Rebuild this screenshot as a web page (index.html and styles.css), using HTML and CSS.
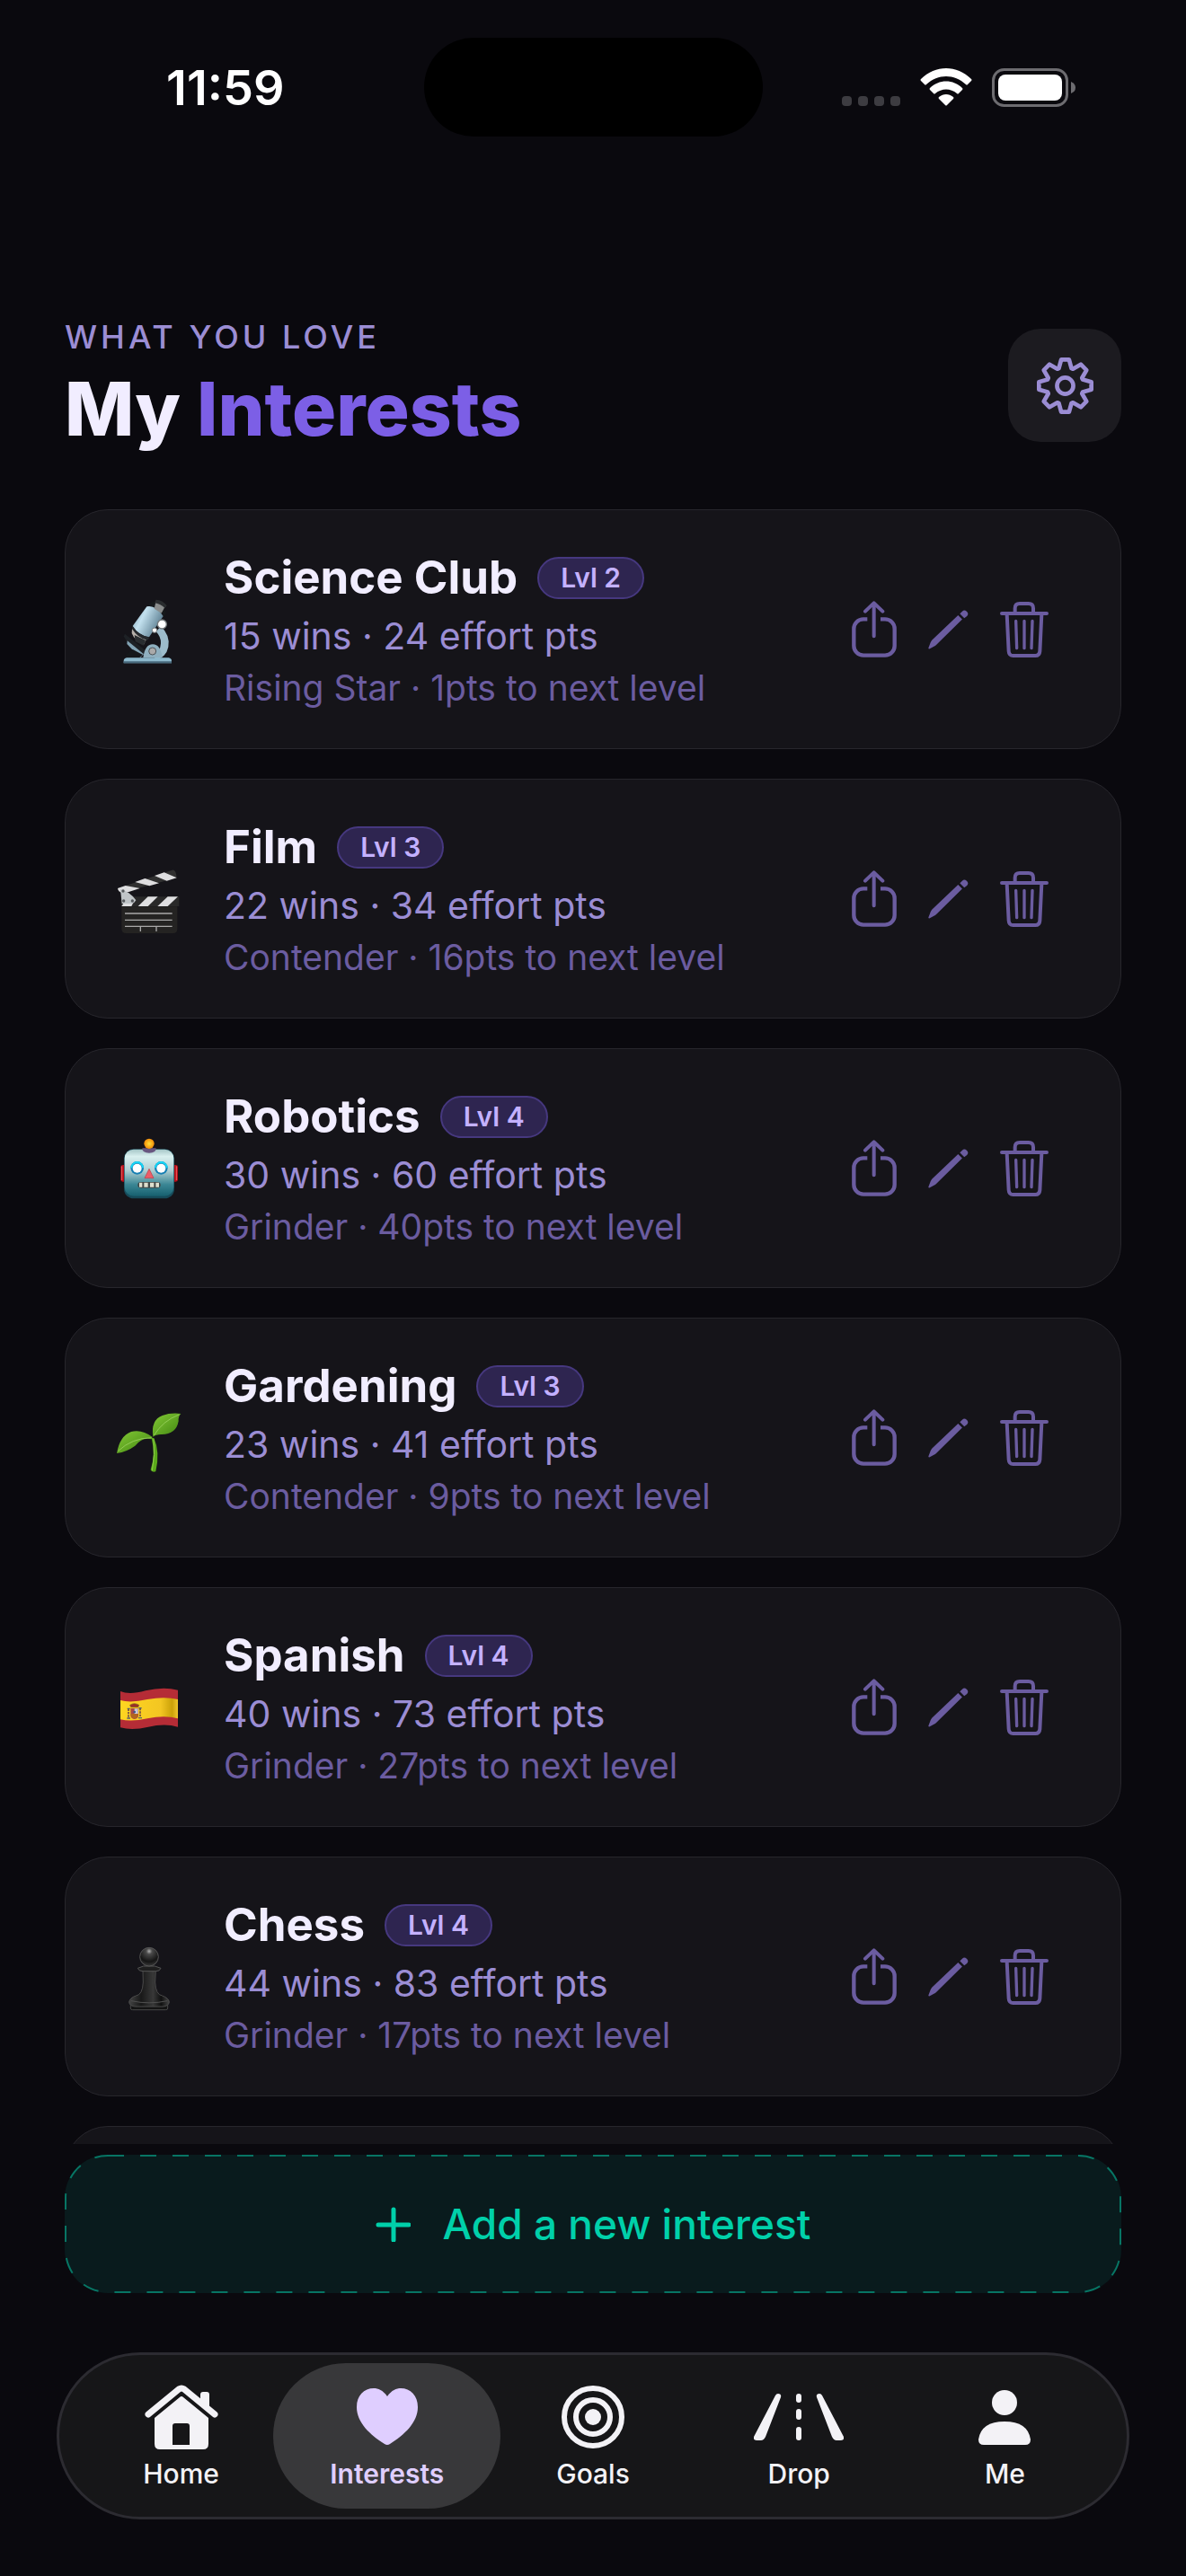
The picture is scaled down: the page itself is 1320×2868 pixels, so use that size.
FILE: index.html
```
<!DOCTYPE html>
<html lang="en">
<head>
<meta charset="UTF-8">
<meta name="viewport" content="width=device-width, initial-scale=1.0">
<title>My Interests</title>
<link rel="stylesheet" href="styles.css">
</head>
<body>
<!-- shared icons -->
<svg class="sprite" aria-hidden="true">
  <symbol id="share" viewBox="0 0 150 189">
    <path d="M52 61H39a32 32 0 0 0-32 32v57a32 32 0 0 0 32 32h72a32 32 0 0 0 32-32V93a32 32 0 0 0-32-32H96" fill="none" stroke="currentColor" stroke-width="13"/>
    <path d="M74 118V8M45 35L74 7l29 28" fill="none" stroke="currentColor" stroke-width="12" stroke-linecap="round" stroke-linejoin="round"/>
  </symbol>
  <symbol id="pencil" viewBox="0 0 136 134">
    <path d="M1 128l7-18q2-5 5-8L101 18l14 14-88 87q-3 3-8 5L5 132q-6 1-4-4z" fill="currentColor"/>
    <path d="M107 13l8-8q7-7 15 0l1 1q7 8 0 15l-9 7z" fill="currentColor"/>
  </symbol>
  <symbol id="trash" viewBox="0 0 162 186">
    <g fill="none" stroke="currentColor" stroke-width="12" stroke-linecap="round">
      <path d="M6 39h150M50 36V22q0-16 16-16h29q16 0 16 16v14"/>
      <path d="M23 42l6 123q1 15 15 15h74q14 0 15-15l6-123"/>
      <path d="M53 64l3 91M81 64v91M108 64l-3 91" stroke-width="10"/>
    </g>
  </symbol>
</svg>

<div class="app">
  <div class="status-bar">
    <div class="status-left">11:59</div>
    <div class="island"></div>
    <div class="status-right">
      <svg class="dots" viewBox="0 0 65 42" fill="#3d3c41">
        <rect x="0" y="31" width="11" height="11" rx="4"/>
        <rect x="18" y="31" width="11" height="11" rx="4"/>
        <rect x="36" y="31" width="11" height="11" rx="4"/>
        <rect x="54" y="31" width="11" height="11" rx="4"/>
      </svg>
      <svg class="wifi" viewBox="0 0 58 42" fill="#fff">
        <path d="M1 12C17-4 41-4 57 12q1 1 0 2l-4 4q-1 1-2 0C38 6 20 6 7 18q-1 1-2 0l-4-4q-1-1 0-2z"/>
        <path d="M11 22c10-10 26-10 36 0q1 1 0 2l-4 4q-1 1-2 0c-7-6-17-6-24 0q-1 1-2 0l-4-4q-1-1 0-2z"/>
        <path d="M21 32c5-4 11-4 16 0q1 1 0 2l-7 7q-1 1-2 0l-7-7q-1-1 0-2z"/>
      </svg>
      <svg class="battery" viewBox="0 0 94 43">
        <rect x="1.500" y="1.500" width="82" height="40" rx="12" fill="none" stroke="#6d6c70" stroke-width="3"/>
        <rect x="7" y="7" width="71" height="29" rx="8" fill="#fff"/>
        <path d="M88 15q5 2 5 6.500t-5 6.500z" fill="#6d6c70"/>
      </svg>
    </div>
  </div>

  <header class="header">
    <div class="heading">
      <p class="eyebrow">WHAT YOU LOVE</p>
      <h1>My <span class="accent">Interests</span></h1>
    </div>
    <button class="settings" aria-label="Settings">
      <svg viewBox="-94 -94 188 188" fill="none" stroke="currentColor" stroke-width="14" stroke-linejoin="round">
        <path d="M-21-58L-13-87H13L21-58 26-56 52-71 71-52 56-26 58-21 87-13V13L58 21 56 26 71 52 52 71 26 56 21 58 13 87H-13L-21 58-26 56-52 71-71 52-56 26-58 21-87 13V-13L-58-21-56-26-71-52-52-71-26-56z"/>
        <circle r="27"/>
      </svg>
    </button>
  </header>

  <ul class="list">
    <li class="card">
      <svg class="emoji" viewBox="0 0 216 216" role="img" aria-label="Microscope">
        <defs>
          <linearGradient id="tube" x1="0" y1="0" x2="1" y2=".5">
            <stop offset="0" stop-color="#6d93a8"/><stop offset=".4" stop-color="#c3e1ef"/><stop offset="1" stop-color="#587b8e"/>
          </linearGradient>
        </defs>
        <path d="M150 97q32 30 25 69-7 35-42 42l-10-16q26-10 27-38 1-22-16-39z" fill="#9dbccb"/>
        <path d="M30 122l68 55-8 16-30-14-34-48z" fill="#1d2125"/>
        <path d="M38 145l55 45-12 12-44-46z" fill="#82a3b4"/>
        <path d="M32 192l24-18 34 18-12 10H36z" fill="#15171a"/>
        <path d="M91 202q6-45 32-45t32 45z" fill="#8fb0c0"/>
        <circle cx="122" cy="180" r="12" fill="#aaa" stroke="#4c5358" stroke-width="3"/>
        <path d="M36 202h140q10 2 10 10v8H26v-7q0-9 10-11z" fill="#8db9cd"/>
        <path d="M26 214h160v6H26z" fill="#47697b"/>
        <path d="M103 31q30-6 55 32l-47 70q-35-5-55-37z" fill="url(#tube)"/>
        <path d="M55 96q20 32 57 38l-6 9q-36-1-53-33z" fill="#25292d"/>
        <path d="M54 106q20 30 47 36l-8 16q-28-9-40-38z" fill="#b5afa9"/>
        <path d="M62 126l38 18-8 17-27-13z" fill="#292d30"/>
        <path d="M108 27q33 3 53 37l7-12q-14-28-46-39z" fill="#16191b"/>
        <path d="M134 12l31 17-13 24-24-15z" fill="#898c8c"/>
        <path d="M134 8q22 1 36 20l-6 9q-14-15-35-18z" fill="#292c2e"/>
        <circle cx="154" cy="90" r="15" fill="#fff" stroke="#73797c" stroke-width="4"/>
        <circle cx="129" cy="110" r="8" fill="#fff" stroke="#73797c" stroke-width="3"/>
      </svg>
      <div class="info">
        <div class="name-row"><h2>Science Club</h2><span class="level">Lvl 2</span></div>
        <p class="stats">15 wins · 24 effort pts</p>
        <p class="next">Rising Star · 1pts to next level</p>
      </div>
      <div class="actions">
        <button class="share" aria-label="Share"><svg><use href="#share"/></svg></button>
        <button class="pencil" aria-label="Edit"><svg><use href="#pencil"/></svg></button>
        <button class="trash" aria-label="Delete"><svg><use href="#trash"/></svg></button>
      </div>
    </li>

    <li class="card">
      <svg class="emoji" viewBox="57 132 216 216" role="img" aria-label="Clapper board">
        <path d="M63 204l182-61q13-2 15 26L76 219q-12-3-13-15z" fill="#303030"/>
        <path d="M63 204l26-9 48 9-37 12-24 3q-12-5-13-15zM121 183l33-12 47 16-32 9zM186 162l32-11 42 18-33 10z" fill="#dedee0"/>
        <path d="M74 232h194v32H74z" fill="#292929"/>
        <path d="M76 264l10-16h31l-8 16zM131 264l33-32h33l-33 32zM196 264l34-32h34l-34 32z" fill="#dfdfe1"/>
        <path d="M72 207q31 7 52 37-5 10-14 11H77z" fill="#c0c5c8"/>
        <circle cx="81" cy="213" r="5" fill="#54585b"/><circle cx="83" cy="246" r="5" fill="#54585b"/><circle cx="112" cy="246" r="5" fill="#54585b"/>
        <path d="M76 265h186v75q0 14-14 14H91q-15 0-15-14z" fill="#242322"/>
        <path d="M87 288h158M87 310h158M87 331h158M139 331v17M192 331v17" stroke="#a9a9a9" stroke-width="4"/>
      </svg>
      <div class="info">
        <div class="name-row"><h2>Film</h2><span class="level">Lvl 3</span></div>
        <p class="stats">22 wins · 34 effort pts</p>
        <p class="next">Contender · 16pts to next level</p>
      </div>
      <div class="actions">
        <button class="share" aria-label="Share"><svg><use href="#share"/></svg></button>
        <button class="pencil" aria-label="Edit"><svg><use href="#pencil"/></svg></button>
        <button class="trash" aria-label="Delete"><svg><use href="#trash"/></svg></button>
      </div>
    </li>

    <li class="card">
      <svg class="emoji" viewBox="57 72 216 216" role="img" aria-label="Robot">
        <defs>
          <linearGradient id="face" x1="0" y1="0" x2="0" y2="1">
            <stop offset="0" stop-color="#a4c5c6"/><stop offset=".15" stop-color="#d9f0ef"/><stop offset=".45" stop-color="#b0cfd3"/><stop offset=".75" stop-color="#3b8795"/><stop offset="1" stop-color="#17606f"/>
          </linearGradient>
          <radialGradient id="bulb"><stop offset="0" stop-color="#ffdf38"/><stop offset="1" stop-color="#f28c08"/></radialGradient>
        </defs>
        <rect x="73" y="168" width="191" height="56" rx="7" fill="#b50d18"/>
        <path d="M77 172v47M259 172v47" stroke="#ef6062" stroke-width="3"/>
        <rect x="84" y="115" width="168" height="165" rx="32" fill="#164b5a"/>
        <rect x="86" y="116" width="164" height="156" rx="30" fill="url(#face)"/>
        <path d="M145 112h46q0 16-23 16t-23-16z" fill="#685780"/>
        <circle cx="168" cy="97" r="17" fill="url(#bulb)"/>
        <circle cx="128" cy="178" r="22" fill="#167fb3"/><circle cx="208" cy="178" r="22" fill="#167fb3"/>
        <path d="M109 178a19 19 0 0 1 38 0M189 178a19 19 0 0 1 38 0" fill="none" stroke="#14d7f7" stroke-width="6"/>
        <circle cx="128" cy="179" r="15" fill="#fff"/><circle cx="208" cy="179" r="15" fill="#fff"/>
        <path d="M168 181l15 31h-30z" fill="#ed5c68" stroke="#bc3943" stroke-width="2"/>
        <rect x="130" y="225" width="76" height="20" rx="10" fill="#424746"/>
        <path d="M135 235h10M151 235h13M171 235h13M190 235h11" stroke="#dedfce" stroke-width="15"/>
      </svg>
      <div class="info">
        <div class="name-row"><h2>Robotics</h2><span class="level">Lvl 4</span></div>
        <p class="stats">30 wins · 60 effort pts</p>
        <p class="next">Grinder · 40pts to next level</p>
      </div>
      <div class="actions">
        <button class="share" aria-label="Share"><svg><use href="#share"/></svg></button>
        <button class="pencil" aria-label="Edit"><svg><use href="#pencil"/></svg></button>
        <button class="trash" aria-label="Delete"><svg><use href="#trash"/></svg></button>
      </div>
    </li>

    <li class="card">
      <svg class="emoji" viewBox="57 972 216 216" role="img" aria-label="Seedling">
        <defs>
          <linearGradient id="leaf" x1="0" y1="0" x2="1" y2="1"><stop offset="0" stop-color="#83c936"/><stop offset="1" stop-color="#408510"/></linearGradient>
        </defs>
        <path d="M176 1080q14 55-3 106 4 10 17 6 15-65-6-112z" fill="#5ba91b"/>
        <path d="M183 1084q6 50-5 105" stroke="#8fcc4c" stroke-width="3" fill="none"/>
        <path d="M60 1131q10-58 48-72 36-9 71 18l-3 7q-30-9-55 22-27 20-61 25z" fill="url(#leaf)"/>
        <path d="M181 1076q-8-56 31-71 28-10 62-6-9 7-8 25-8 45-58 44-18 1-27 8z" fill="url(#leaf)"/>
        <path d="M64 1124q46-44 112-45M184 1071q30-49 84-69" stroke="#aadc70" stroke-width="2" fill="none"/>
      </svg>
      <div class="info">
        <div class="name-row"><h2>Gardening</h2><span class="level">Lvl 3</span></div>
        <p class="stats">23 wins · 41 effort pts</p>
        <p class="next">Contender · 9pts to next level</p>
      </div>
      <div class="actions">
        <button class="share" aria-label="Share"><svg><use href="#share"/></svg></button>
        <button class="pencil" aria-label="Edit"><svg><use href="#pencil"/></svg></button>
        <button class="trash" aria-label="Delete"><svg><use href="#trash"/></svg></button>
      </div>
    </li>

    <li class="card">
      <svg class="emoji" viewBox="57 12 216 216" role="img" aria-label="Flag of Spain">
        <defs>
          <linearGradient id="gold"><stop offset="0" stop-color="#ffd521"/><stop offset=".7" stop-color="#f3c622"/><stop offset=".9" stop-color="#cba109"/><stop offset="1" stop-color="#efc52a"/></linearGradient>
        </defs>
        <path d="M72 66q30 13 84-2 60-15 108-2v123q-43-13-99 0-53 13-93 2z" fill="#b52c36"/>
        <path d="M72 96q34 10 90-3 58-11 102 0v64q-44-12-102 0-53 12-90 3z" fill="url(#gold)"/>
        <path d="M99 125v31M138 123v32" stroke="#744a45" stroke-width="5" stroke-dasharray="7 3"/>
        <path d="M94 156h11M132 155h12M95 124h9M133 122h10" stroke="#55636b" stroke-width="4"/>
        <path d="M106 123h26v24q-1 11-13 12-12-1-13-12z" fill="#a9474b"/>
        <path d="M119 124h12v17h-12z" fill="#c9cad5"/>
        <path d="M107 141h24v9q-6 8-12 8t-12-8z" fill="#b36620"/>
        <path d="M107 119l-3-7q14-10 30 0l-3 7z" fill="#9b2f27" stroke="#7b6420" stroke-width="2"/>
        <circle cx="119" cy="135" r="4" fill="#3e578b"/>
      </svg>
      <div class="info">
        <div class="name-row"><h2>Spanish</h2><span class="level">Lvl 4</span></div>
        <p class="stats">40 wins · 73 effort pts</p>
        <p class="next">Grinder · 27pts to next level</p>
      </div>
      <div class="actions">
        <button class="share" aria-label="Share"><svg><use href="#share"/></svg></button>
        <button class="pencil" aria-label="Edit"><svg><use href="#pencil"/></svg></button>
        <button class="trash" aria-label="Delete"><svg><use href="#trash"/></svg></button>
      </div>
    </li>

    <li class="card">
      <svg class="emoji" viewBox="57 912 216 216" role="img" aria-label="Chess pawn">
        <defs>
          <radialGradient id="ball" cx=".5" cy=".2" r=".8"><stop offset="0" stop-color="#b0b0b0"/><stop offset=".2" stop-color="#4a4a4a"/><stop offset=".7" stop-color="#141414"/><stop offset="1" stop-color="#3a3a3a"/></radialGradient>
          <linearGradient id="stem"><stop offset="0" stop-color="#444"/><stop offset=".3" stop-color="#181818"/><stop offset=".6" stop-color="#383838"/><stop offset=".8" stop-color="#101010"/><stop offset="1" stop-color="#444"/></linearGradient>
        </defs>
        <path d="M106 1113h124v12q0 5-7 5H113q-7 0-7-5z" fill="#141414" stroke="#484848" stroke-width="3"/>
        <path d="M124 1083q22-3 24-45l-1-39h43l-2 39q2 42 24 45 22 8 23 21-2 14-22 15h-90q-21-1-22-15 2-14 23-21z" fill="url(#stem)" stroke="#4a4a4a" stroke-width="3"/>
        <path d="M108 1100q60 13 121 0" fill="none" stroke="#505050" stroke-width="3"/>
        <path d="M130 991l19-7h38l20 7q-3 10-17 10h-43q-14 0-17-10z" fill="#1e1e1e" stroke="#545454" stroke-width="3"/>
        <circle cx="168" cy="953" r="31" fill="url(#ball)" stroke="#555" stroke-width="3"/>
      </svg>
      <div class="info">
        <div class="name-row"><h2>Chess</h2><span class="level">Lvl 4</span></div>
        <p class="stats">44 wins · 83 effort pts</p>
        <p class="next">Grinder · 17pts to next level</p>
      </div>
      <div class="actions">
        <button class="share" aria-label="Share"><svg><use href="#share"/></svg></button>
        <button class="pencil" aria-label="Edit"><svg><use href="#pencil"/></svg></button>
        <button class="trash" aria-label="Delete"><svg><use href="#trash"/></svg></button>
      </div>
    </li>

    <li class="card card-empty"></li>
  </ul>

  <button class="add">
    <svg class="dash" aria-hidden="true"><rect rx="47"/></svg>
    <svg class="plus" viewBox="0 0 39 39" aria-hidden="true"><path d="M20 3v34M3 20h34" stroke="currentColor" stroke-width="5" stroke-linecap="round"/></svg>
    Add a new interest
  </button>

  <nav class="tabs">
    <a class="tab" href="#home">
      <span class="tab-icon">
        <svg width="82" height="72" viewBox="0 0 82 72">
          <path d="M4 33L38 5q3-2 6 0l34 28" fill="none" stroke="currentColor" stroke-width="7" stroke-linecap="round"/>
          <path d="M62 20V11q0-3 3-3h4q3 0 3 3v18z" fill="currentColor"/>
          <path fill-rule="evenodd" d="M11 37L39 14q2-2 4 0l28 23v29q0 6-6 6H17q-6 0-6-6zM31 46v21h19V46q0-3-3-3H34q-3 0-3 3z" fill="currentColor"/>
        </svg>
      </span>
      Home
    </a>
    <a class="tab active" href="#interests" aria-current="page">
      <span class="tab-icon">
        <svg width="68" height="64" viewBox="0 0 68 64"><path d="M34 9C39 2 44 0 49 0c11 0 19 8 19 21 0 17-15 31-31 41q-3 2-6 0C15 52 0 38 0 21 0 8 8 0 19 0c5 0 10 2 15 9z" fill="currentColor"/></svg>
      </span>
      Interests
    </a>
    <a class="tab" href="#goals">
      <span class="tab-icon">
        <svg width="70" height="70" viewBox="0 0 70 70" fill="none" stroke="currentColor" stroke-width="6"><circle cx="35" cy="35" r="32"/><circle cx="35" cy="35" r="19"/><circle cx="35" cy="35" r="9" fill="currentColor" stroke="none"/></svg>
      </span>
      Goals
    </a>
    <a class="tab" href="#drop">
      <span class="tab-icon">
        <svg width="100" height="52" viewBox="0 0 100 52" fill="currentColor">
          <path d="M24 2q1-2 3-2 4 0 3 4L13 48q-2 4-5 4H3q-4 0-3-4zM76 2q-1-2-3-2-4 0-3 4l17 44q2 4 5 4h5q4 0 3-4z"/>
          <rect x="47" y="0" width="6" height="10" rx="3"/><rect x="47" y="17" width="6" height="12" rx="3"/><rect x="47" y="37" width="6" height="15" rx="3"/>
        </svg>
      </span>
      Drop
    </a>
    <a class="tab" href="#me">
      <span class="tab-icon">
        <svg width="58" height="62" viewBox="0 0 58 62" fill="currentColor"><circle cx="29" cy="15" r="14"/><path d="M0 56Q3 36 29 36t29 20q0 6-6 6H6q-6 0-6-6z"/></svg>
      </span>
      Me
    </a>
  </nav>
</div>
</body>
</html>
```
FILE: styles.css
```
* {
  box-sizing: border-box;
}
body {
  margin: 0;
  background: #0a090e;
  color: #f1edff;
  font-family: Inter, "Liberation Sans", sans-serif;
}
h1, h2, p, ul {
  margin: 0;
  padding: 0;
}
button {
  border: 0;
  padding: 0;
  background: none;
  color: inherit;
  font: inherit;
  cursor: pointer;
}
svg {
  display: block;
  flex: none;
}
.sprite {
  position: absolute;
  width: 0;
  height: 0;
}
.app {
  display: flex;
  flex-direction: column;
  height: 100vh;
  padding-bottom: 63px;
}

/* status bar */
.status-bar {
  display: grid;
  grid-template-columns: 1fr 377px 1fr;
  align-items: center;
  padding-top: 42px;
}
.status-left,
.status-right {
  display: flex;
  align-items: center;
}
.status-left {
  justify-content: center;
  padding-left: 30px;
  color: #fff;
  font-size: 54px;
  font-weight: 600;
}
.status-right {
  justify-content: flex-end;
  gap: 22px;
  padding-right: 122px;
}
.island {
  height: 110px;
  border-radius: 55px;
  background: #000;
}
.dots {
  width: 65px;
  height: 42px;
}
.wifi {
  width: 58px;
  height: 42px;
}
.battery {
  width: 94px;
  height: 43px;
}

/* header */
.header {
  display: flex;
  align-items: center;
  justify-content: space-between;
  margin-top: 201px;
  padding: 0 72px;
}
.eyebrow {
  margin-bottom: 10px;
  color: #9b8dd4;
  font-size: 36px;
  line-height: 44px;
  font-weight: 500;
  letter-spacing: 4px;
}
h1 {
  font-size: 82px;
  line-height: 98px;
  font-weight: 800;
}
.accent {
  color: #7c5fe6;
}
.settings {
  display: flex;
  align-items: center;
  justify-content: center;
  width: 126px;
  height: 126px;
  border-radius: 36px;
  background: #1c1b20;
  color: #9b8dd4;
}
.settings svg {
  width: 63px;
  height: 63px;
}

/* interest cards */
.list {
  flex: 1;
  min-height: 0;
  display: flex;
  flex-direction: column;
  gap: 33px;
  margin: 62px 72px 12px;
  overflow: hidden;
  list-style: none;
}
.card {
  flex: none;
  display: flex;
  align-items: center;
  padding: 45px 80px 45px 56px;
  border: 1px solid #27262c;
  border-radius: 48px;
  background: #151419;
}
.card-empty {
  height: 267px;
}
.emoji {
  width: 72px;
  height: 72px;
  margin-right: 48px;
  overflow: visible;
}
.info {
  flex: 1;
  display: flex;
  flex-direction: column;
  gap: 10px;
}
.name-row {
  display: flex;
  align-items: center;
  gap: 22px;
}
h2 {
  font-size: 51px;
  line-height: 60px;
  font-weight: 700;
}
.level {
  padding: 0 24px;
  border: 2px solid #46387f;
  border-radius: 24px;
  background: #2e2550;
  color: #c4b1ff;
  font-size: 30px;
  line-height: 43px;
  font-weight: 600;
}
.stats {
  color: #9b8dd4;
  font-size: 41px;
  line-height: 50px;
}
.next {
  color: #6b5ca0;
  font-size: 39px;
  line-height: 45px;
}
.actions {
  display: flex;
  align-items: center;
  gap: 35px;
  color: #6b5ca0;
}
.actions svg {
  width: 100%;
  height: 100%;
}
.share {
  width: 50px;
  height: 63px;
}
.pencil {
  width: 45px;
  height: 44px;
}
.trash {
  width: 54px;
  height: 62px;
}

/* add button */
.add {
  position: relative;
  display: flex;
  align-items: center;
  justify-content: center;
  gap: 36px;
  height: 154px;
  margin: 0 72px;
  border-radius: 48px;
  background: #091b1d;
  color: #00d0aa;
  font-size: 46px;
  font-weight: 500;
}
.dash {
  position: absolute;
  inset: 0;
  width: 100%;
  height: 100%;
}
.dash rect {
  x: 1px;
  y: 1px;
  width: calc(100% - 2px);
  height: calc(100% - 2px);
  fill: none;
  stroke: #077564;
  stroke-width: 2px;
  stroke-dasharray: 18 18;
}
.plus {
  width: 39px;
  height: 39px;
}

/* tab bar */
.tabs {
  display: flex;
  margin: 66px 63px 0;
  padding: 9px 21px;
  border: 3px solid #2c2b31;
  border-radius: 93px;
  background: #161618;
}
.tab {
  flex: 1;
  display: flex;
  flex-direction: column;
  align-items: center;
  gap: 9px;
  margin: 0 -12px;
  padding: 24px 0 21px;
  border-radius: 81px;
  color: #f3f2f6;
  font-size: 30px;
  line-height: 36px;
  font-weight: 500;
  text-decoration: none;
}
.tab-icon {
  display: flex;
  align-items: center;
  height: 72px;
}
.active {
  background: #38383a;
  color: #dfceff;
  font-weight: 600;
}
```
